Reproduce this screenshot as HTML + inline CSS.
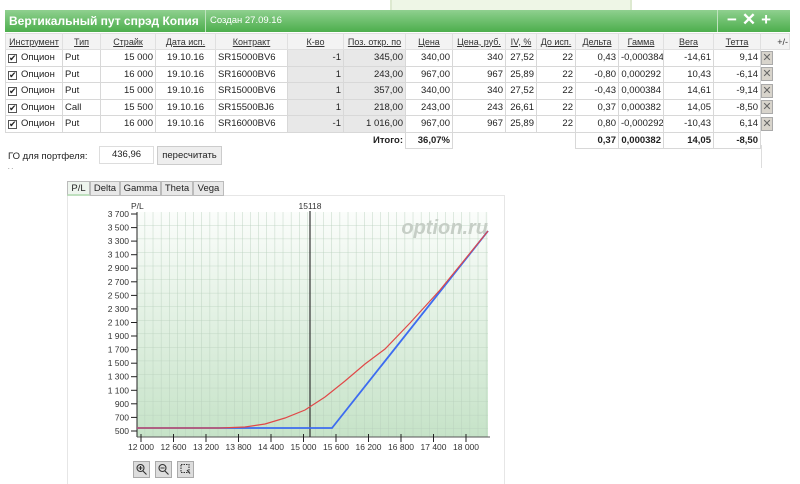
<!DOCTYPE html>
<html><head><meta charset="utf-8">
<style>
*{margin:0;padding:0;box-sizing:border-box}
body{width:800px;height:484px;background:#fff;font-family:"Liberation Sans",Arial,sans-serif;font-size:9.5px;color:#222;position:relative;overflow:hidden}
.abs{position:absolute}
.hdr{left:5px;top:10px;width:785px;height:22px;background:linear-gradient(#8fd08f,#4cae4c)}
table{position:absolute;left:5px;top:33px;width:784px;border-collapse:collapse;table-layout:fixed;font-size:9.5px}
td{border:1px solid #d8d8d8;height:16.5px;padding:0 2px;white-space:nowrap;overflow:hidden}
tr.h td{background:#f3f3f3;text-align:center;text-decoration:underline;color:#333;height:16px;border-color:#e0e0e0;font-size:9px;padding:0 1px}
.r{text-align:right}.c{text-align:center}
.g{background:#e8e8e8}
.cb{display:inline-block;width:9px;height:9px;border:1px solid #555;vertical-align:-1px;margin-right:4px;font-size:9px;line-height:7px;text-align:center}
.x{background:#d8d4cc;border:1px solid #aaa;color:#666;text-align:center;font-size:11px;line-height:13px;padding:0}
</style></head><body>
<div class="abs" style="left:390px;top:0;width:242px;height:18px;background:#eef6e6;border:2px solid #dde9d0;border-top:none"></div>
<div class="abs hdr"></div>
<div class="abs" style="left:5px;top:10px;width:201px;height:22px;border-right:1px solid #bfe3bf;color:#fff;font-weight:bold;font-size:12px;line-height:22px;padding-left:4px;white-space:nowrap;overflow:hidden">Вертикальный пут спрэд Копия</div>
<div class="abs" style="left:210px;top:10px;color:#fff;font-size:9.5px;line-height:22px">Создан 27.09.16</div>
<div class="abs" style="left:717px;top:10px;height:22px;border-left:1px solid #bfe3bf;width:73px;color:#fff;font-weight:bold;font-size:17px;line-height:20px;padding-left:9px;letter-spacing:5px">−✕+</div>
<table>
<colgroup><col style="width:57px"><col style="width:38px"><col style="width:55px"><col style="width:60px"><col style="width:72px"><col style="width:56px"><col style="width:62px"><col style="width:47px"><col style="width:53px"><col style="width:31px"><col style="width:39px"><col style="width:43px"><col style="width:45px"><col style="width:50px"><col style="width:47px"><col style="width:29px"></colgroup>
<tr class="h"><td>Инструмент</td><td>Тип</td><td>Страйк</td><td>Дата исп.</td><td>Контракт</td><td>К-во</td><td>Поз. откр. по</td><td>Цена</td><td>Цена, руб.</td><td>IV, %</td><td>До исп.</td><td>Дельта</td><td>Гамма</td><td>Вега</td><td>Тетта</td><td style="text-decoration:none;text-align:right">+/-</td></tr>
<tr><td><span class="cb">✔</span>Опцион</td><td>Put</td><td class="r">15 000</td><td class="c">19.10.16</td><td>SR15000BV6</td><td class="r g">-1</td><td class="r g">345,00</td><td class="r">340,00</td><td class="r">340</td><td class="r">27,52</td><td class="r">22</td><td class="r">0,43</td><td class="r">-0,000384</td><td class="r">-14,61</td><td class="r">9,14</td><td style="border:none;padding:0"><div class="x" style="width:12px;height:14px">✕</div></td></tr>
<tr><td><span class="cb">✔</span>Опцион</td><td>Put</td><td class="r">16 000</td><td class="c">19.10.16</td><td>SR16000BV6</td><td class="r g">1</td><td class="r g">243,00</td><td class="r">967,00</td><td class="r">967</td><td class="r">25,89</td><td class="r">22</td><td class="r">-0,80</td><td class="r">0,000292</td><td class="r">10,43</td><td class="r">-6,14</td><td style="border:none;padding:0"><div class="x" style="width:12px;height:14px">✕</div></td></tr>
<tr><td><span class="cb">✔</span>Опцион</td><td>Put</td><td class="r">15 000</td><td class="c">19.10.16</td><td>SR15000BV6</td><td class="r g">1</td><td class="r g">357,00</td><td class="r">340,00</td><td class="r">340</td><td class="r">27,52</td><td class="r">22</td><td class="r">-0,43</td><td class="r">0,000384</td><td class="r">14,61</td><td class="r">-9,14</td><td style="border:none;padding:0"><div class="x" style="width:12px;height:14px">✕</div></td></tr>
<tr><td><span class="cb">✔</span>Опцион</td><td>Call</td><td class="r">15 500</td><td class="c">19.10.16</td><td>SR15500BJ6</td><td class="r g">1</td><td class="r g">218,00</td><td class="r">243,00</td><td class="r">243</td><td class="r">26,61</td><td class="r">22</td><td class="r">0,37</td><td class="r">0,000382</td><td class="r">14,05</td><td class="r">-8,50</td><td style="border:none;padding:0"><div class="x" style="width:12px;height:14px">✕</div></td></tr>
<tr><td><span class="cb">✔</span>Опцион</td><td>Put</td><td class="r">16 000</td><td class="c">19.10.16</td><td>SR16000BV6</td><td class="r g">-1</td><td class="r g">1 016,00</td><td class="r">967,00</td><td class="r">967</td><td class="r">25,89</td><td class="r">22</td><td class="r">0,80</td><td class="r">-0,000292</td><td class="r">-10,43</td><td class="r">6,14</td><td style="border:none;padding:0"><div class="x" style="width:12px;height:14px">✕</div></td></tr>
<tr style="font-weight:bold"><td colspan="7" class="r" style="border:none">Итого:</td><td class="r">36,07%</td><td colspan="3" style="border:none;border-right:1px solid #d8d8d8"></td><td class="r">0,37</td><td class="r">0,000382</td><td class="r">14,05</td><td class="r">-8,50</td><td style="border:none;border-left:1px solid #d8d8d8"></td></tr>
</table>
<div class="abs" style="left:761px;top:145px;width:1px;height:23px;background:#ddd"></div>
<div class="abs" style="left:8px;top:151px">ГО для портфеля:</div>
<div class="abs" style="left:99px;top:146px;width:55px;height:18px;border:1px solid #ddd;text-align:center;line-height:16px">436,96</div>
<div class="abs" style="left:157px;top:146px;width:65px;height:19px;border:1px solid #ccc;background:#eee;text-align:center;line-height:17px">пересчитать</div>
<div class="abs" style="left:8px;top:165px;font-size:6px;color:#444">. .</div>

<div class="abs" style="left:67px;top:195px;width:438px;height:289px;border:1px solid #e6e6e6;border-bottom:none"></div>
<div class="abs" style="left:67px;top:181px;display:flex;font-size:9.5px">
<div style="width:23px;height:15px;border:1px solid #bbb;background:#eef5ee;border-bottom:2px solid #bfe0bf;text-align:center;line-height:13px">P/L</div>
<div style="width:30px;height:15px;border:1px solid #bbb;background:#e8e8e8;text-align:center;line-height:13px">Delta</div>
<div style="width:41px;height:15px;border:1px solid #bbb;background:#e8e8e8;text-align:center;line-height:13px">Gamma</div>
<div style="width:32px;height:15px;border:1px solid #bbb;background:#e8e8e8;text-align:center;line-height:13px">Theta</div>
<div style="width:31px;height:15px;border:1px solid #bbb;background:#e8e8e8;text-align:center;line-height:13px">Vega</div>
</div>
<svg class="abs" style="left:0;top:0" width="800" height="484" font-family="Liberation Sans,Arial,sans-serif" font-size="8.5" fill="#333">
<defs>
<linearGradient id="bg" x1="0" y1="0" x2="0" y2="1"><stop offset="0" stop-color="#fbfdfb"/><stop offset="1" stop-color="#c6e3c8"/></linearGradient>
<pattern id="gr" x="137" y="212" width="8.125" height="13.56" patternUnits="userSpaceOnUse"><path d="M8.1 0V13.56M0 13.56H8.1" stroke="#b8cfbc" stroke-width="0.8" fill="none"/></pattern>
</defs>
<rect x="137" y="212" width="351" height="225" fill="url(#bg)"/>
<rect x="137" y="212" width="351" height="225" fill="url(#gr)"/>
<text x="488" y="234" text-anchor="end" font-size="20" font-weight="bold" font-style="italic" fill="#c6cec6">option.ru</text>
<line x1="137" y1="212" x2="137" y2="437" stroke="#222"/>
<line x1="137" y1="437" x2="490" y2="437" stroke="#555"/>
<g stroke="#222">
<line x1="131" y1="214" x2="137" y2="214"/><line x1="131" y1="227.6" x2="137" y2="227.6"/><line x1="131" y1="241.1" x2="137" y2="241.1"/><line x1="131" y1="254.7" x2="137" y2="254.7"/><line x1="131" y1="268.2" x2="137" y2="268.2"/><line x1="131" y1="281.8" x2="137" y2="281.8"/><line x1="131" y1="295.4" x2="137" y2="295.4"/><line x1="131" y1="308.9" x2="137" y2="308.9"/><line x1="131" y1="322.5" x2="137" y2="322.5"/><line x1="131" y1="336" x2="137" y2="336"/><line x1="131" y1="349.6" x2="137" y2="349.6"/><line x1="131" y1="363.2" x2="137" y2="363.2"/><line x1="131" y1="376.7" x2="137" y2="376.7"/><line x1="131" y1="390.3" x2="137" y2="390.3"/><line x1="131" y1="403.8" x2="137" y2="403.8"/><line x1="131" y1="417.4" x2="137" y2="417.4"/><line x1="131" y1="431" x2="137" y2="431"/>
<line x1="141" y1="434" x2="141" y2="442"/><line x1="173.5" y1="434" x2="173.5" y2="442"/><line x1="206" y1="434" x2="206" y2="442"/><line x1="238.5" y1="434" x2="238.5" y2="442"/><line x1="271" y1="434" x2="271" y2="442"/><line x1="303.5" y1="434" x2="303.5" y2="442"/><line x1="336" y1="434" x2="336" y2="442"/><line x1="368.5" y1="434" x2="368.5" y2="442"/><line x1="401" y1="434" x2="401" y2="442"/><line x1="433.5" y1="434" x2="433.5" y2="442"/><line x1="466" y1="434" x2="466" y2="442"/>
</g>
<g text-anchor="end">
<text x="129" y="217">3 700</text><text x="129" y="230.6">3 500</text><text x="129" y="244.1">3 300</text><text x="129" y="257.7">3 100</text><text x="129" y="271.2">2 900</text><text x="129" y="284.8">2 700</text><text x="129" y="298.4">2 500</text><text x="129" y="311.9">2 300</text><text x="129" y="325.5">2 100</text><text x="129" y="339">1 900</text><text x="129" y="352.6">1 700</text><text x="129" y="366.2">1 500</text><text x="129" y="379.7">1 300</text><text x="129" y="393.3">1 100</text><text x="129" y="406.8">900</text><text x="129" y="420.4">700</text><text x="129" y="434">500</text>
</g>
<text x="131" y="209">P/L</text>
<g text-anchor="middle">
<text x="141" y="450">12 000</text><text x="173.5" y="450">12 600</text><text x="206" y="450">13 200</text><text x="238.5" y="450">13 800</text><text x="271" y="450">14 400</text><text x="303.5" y="450">15 000</text><text x="336" y="450">15 600</text><text x="368.5" y="450">16 200</text><text x="401" y="450">16 800</text><text x="433.5" y="450">17 400</text><text x="466" y="450">18 000</text>
<text x="310" y="209">15118</text>
</g>
<line x1="310" y1="211" x2="310" y2="437" stroke="#333" stroke-width="1.2"/>
<polyline points="137,428 332,428 488,231" fill="none" stroke="#3d6cf0" stroke-width="1.8"/>
<polyline points="137,428 220,428 245,427 265,424 285,418 305,410 325,397 345,381 365,364 385,349 410,323 440,290 488,231" fill="none" stroke="#e04848" stroke-width="1.2"/>
<g fill="#ddd" stroke="#aaa"><rect x="133.5" y="461.5" width="16" height="16"/><rect x="155.5" y="461.5" width="16" height="16"/><rect x="177.5" y="461.5" width="16" height="16"/></g>
<g fill="none" stroke="#333" stroke-width="1.1"><circle cx="140.5" cy="468" r="3.5"/><path d="M143 471l3.5 3.5M138.5 468h4M140.5 466v4"/><circle cx="162.5" cy="468" r="3.5"/><path d="M165 471l3.5 3.5M160.5 468h4"/><rect x="181" y="464.5" width="8" height="8" stroke-dasharray="1.5 1"/><path d="M187 470l3 3.5"/></g>
</svg>
</body></html>
